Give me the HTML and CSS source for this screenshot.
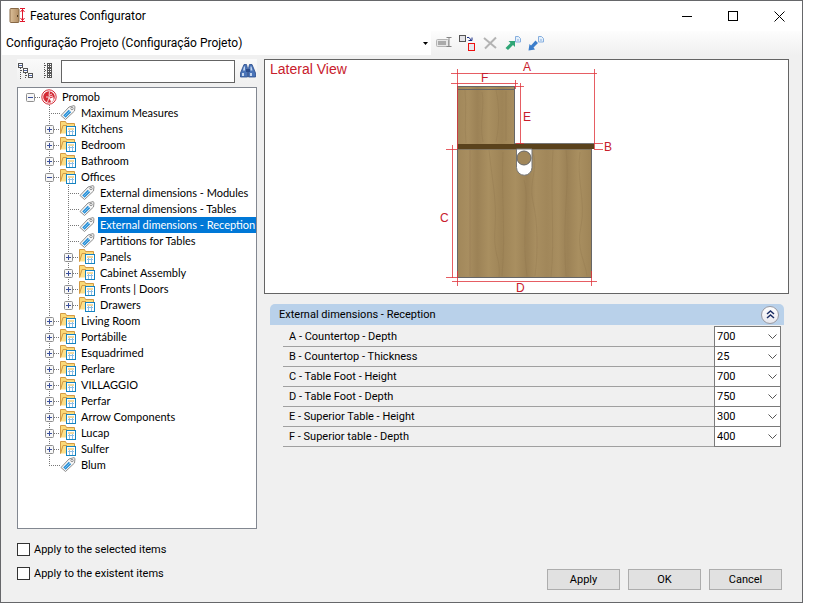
FILE: index.html
```html
<!DOCTYPE html>
<html lang="en">
  <head>
    <meta charset="UTF-8" />
    <meta name="viewport" content="width=device-width, initial-scale=1.0" />
    <title>Features Configurator</title>
    <link rel="stylesheet" href="styles.css">
  </head>
  <body>
    <!-- shared icons -->
    <svg class="sprite" aria-hidden="true">
      <symbol id="folder" viewBox="0 0 16 16">
        <path d="M.5 12.500V.5h5l1 2h8v3" fill="#fbd977" stroke="#d29a45" />
        <path d="M1 12.500l2-8h11v8z" fill="#fde08a" />
        <path d="M.5 12.500l2.500-8h4" fill="none" stroke="#d29a45" />
        <rect x="6.500" y="5.500" width="9" height="9" fill="#fff" stroke="#1583c0" />
        <path d="M8 8h6" stroke="#e9b53c" />
        <path d="M8 10.500h6M9.500 9v5M12.500 9v5" stroke="#8dbfe6" />
      </symbol>
      <symbol id="tag" viewBox="0 0 16 16">
        <path d="M1 10.500L9 2 14 .6 15 1.500 14.500 6 5.500 14.500z" fill="#f6f6f6" stroke="#8e8e8e" stroke-linejoin="round" />
        <circle cx="12" cy="3.500" r="1.200" fill="#fff" stroke="#8e8e8e" />
        <path d="M3.200 10.500L8.800 4.800l2.400 2.400-5.600 5.600z" fill="#2b8fd6" />
        <path d="M4.500 11.500l5.500-5.500" stroke="#8fd0f5" stroke-width=".8" />
      </symbol>
      <symbol id="plus" viewBox="0 0 9 9">
        <rect x=".5" y=".5" width="8" height="8" rx="1" fill="#f7f7f7" stroke="#8f8f8f" />
        <path d="M2 4.500h5M4.500 2v5" stroke="#3a4f9c" />
      </symbol>
      <symbol id="minus" viewBox="0 0 9 9">
        <rect x=".5" y=".5" width="8" height="8" rx="1" fill="#f7f7f7" stroke="#8f8f8f" />
        <path d="M2 4.500h5" stroke="#3a4f9c" />
      </symbol>
      <symbol id="chevron" viewBox="0 0 9 6">
        <path d="M.5.5l4 4 4-4" fill="none" stroke="#555" />
      </symbol>
    </svg>

    <div class="window">
      <header class="titlebar">
        <svg class="app-icon" width="17" height="16" viewBox="0 0 17 16">
          <defs>
            <linearGradient id="door"><stop offset="0" stop-color="#dcc09a" /><stop offset="1" stop-color="#b08c62" /></linearGradient>
          </defs>
          <rect x="1" y=".5" width="9" height="14" rx="1" fill="url(#door)" stroke="#876845" />
          <path d="M8.500 7v2" stroke="#4f3c24" />
          <path d="M11 .5h5M11 13.500h5M13.500 1v12M11.500 4l2-2.500 2 2.500M11.500 10l2 2.500 2-2.500" fill="none" stroke="#e0162b" />
        </svg>
        <h1 class="title">Features Configurator</h1>
        <button class="caption-btn" type="button" aria-label="Minimize">
          <svg width="11" height="11" viewBox="0 0 11 11"><path d="M0 5.500h10" stroke="#000" /></svg>
        </button>
        <button class="caption-btn" type="button" aria-label="Maximize">
          <svg width="11" height="11" viewBox="0 0 11 11"><rect x=".5" y=".5" width="9" height="9" fill="none" stroke="#000" /></svg>
        </button>
        <button class="caption-btn" type="button" aria-label="Close">
          <svg width="11" height="11" viewBox="0 0 11 11"><path d="M.5.5l10 10M10.500.5l-10 10" stroke="#000" /></svg>
        </button>
      </header>

      <div class="toolbar">
        <div class="project">
          <select class="project-select" aria-label="Project">
            <option>Configuração Projeto (Configuração Projeto)</option>
          </select>
          <svg class="project-arrow" width="5" height="3" viewBox="0 0 5 3"><path d="M0 0h5L2.500 3z" /></svg>
        </div>
        <button class="tool" type="button" aria-label="Rename">
          <svg width="16" height="16" viewBox="0 0 16 16">
            <rect x=".5" y="4.500" width="12" height="7" rx="1" fill="#e6e6e6" stroke="#b4b4b4" />
            <rect x="2" y="6" width="8" height="4" fill="#aaa" />
            <path d="M10.500 2.500h5M10.500 11.500h5M13 3v8" stroke="#858585" />
          </svg>
        </button>
        <button class="tool" type="button" aria-label="Replace">
          <svg width="16" height="16" viewBox="0 0 16 16">
            <rect x=".5" y=".5" width="6" height="6" fill="#e4e4e8" stroke="#555" />
            <path d="M8 2.500h2l2.500 3M9.500 5.500h3.500V2.500" fill="none" stroke="#1a2e86" />
            <rect x="9.500" y="8.500" width="6" height="7" fill="#e8e8ee" stroke="#ee1010" />
          </svg>
        </button>
        <button class="tool" type="button" aria-label="Delete">
          <svg width="16" height="16" viewBox="0 0 16 16"><path d="M2 3l12 10M14 2.500L3 13.500" stroke="#b3b3b3" stroke-width="2" /></svg>
        </button>
        <button class="tool" type="button" aria-label="Export">
          <svg width="16" height="16" viewBox="0 0 16 16">
            <path d="M10.500 1.500h3l2 2v3.500h-5z" fill="#e4f0fb" stroke="#86aede" />
            <path d="M12 5h2" stroke="#86aede" />
            <path d="M3.500 6h6.500v6l-2-2-5 5L.5 13l5-5z" fill="#2fa676" />
          </svg>
        </button>
        <button class="tool" type="button" aria-label="Import">
          <svg width="16" height="16" viewBox="0 0 16 16">
            <path d="M10.500 1.500h3l2 2v3.500h-5z" fill="#e4f0fb" stroke="#86aede" />
            <path d="M12 5h2" stroke="#86aede" />
            <path d="M7.500 5.500L10 8l-4.500 4.500L7 14.500.5 15.500l1-6.500 1.500 1.500z" fill="#3c7ecb" />
          </svg>
        </button>
      </div>

      <div class="content">
        <aside class="side">
          <div class="search">
            <button class="search-btn" type="button" aria-label="Expand all">
              <svg width="16" height="16" viewBox="0 0 16 16" fill="none" stroke="#555">
                <rect x=".5" y=".5" width="4" height="4" fill="#fff" /><rect x="5.500" y="5.500" width="4" height="4" fill="#fff" /><rect x="10.500" y="10.500" width="4" height="4" fill="#fff" />
                <path d="M1 2.500h3M6 7.500h3M11 12.500h3" stroke="#5068a8" />
                <path d="M2.500 5v11M7.500 10v6M3 7.500h2M8 12.500h2" stroke-dasharray="1 1" />
              </svg>
            </button>
            <button class="search-btn" type="button" aria-label="Collapse all">
              <svg width="16" height="16" viewBox="0 0 16 16" fill="none" stroke="#555">
                <path d="M4.500 0v16M5 2.500h2M5 7.500h2M5 12.500h2" stroke-dasharray="1 1" />
                <rect x="7.500" y=".5" width="4" height="4" fill="#fff" /><rect x="7.500" y="5.500" width="4" height="4" fill="#fff" /><rect x="7.500" y="10.500" width="4" height="4" fill="#fff" />
                <path d="M8 2.500h3M8 7.500h3M8 12.500h3M9.500 1v3M9.500 6v3M9.500 11v3" />
              </svg>
            </button>
            <input class="search-input" type="text" aria-label="Search" />
            <button class="search-btn" type="button" aria-label="Find">
              <svg width="16" height="14" viewBox="0 0 16 14">
                <path d="M4 .5h2.500l1 4V13h-7V9zM12 .5H9.500l-1 4V13h7V9z" fill="#4a74b8" stroke="#294b8c" stroke-width=".8" />
                <path d="M6 5h4v3H6z" fill="#294b8c" />
                <path d="M2 9h2v3H2zM10 9h2v3h-2zM4 2.500h1v4H3zM10.500 2.500h1l1 4h-2z" fill="#c5d7f0" />
              </svg>
            </button>
          </div>

          <div class="tree">
            <ul class="root">
              <li>
                <div class="node">
                  <button class="toggle" type="button" aria-label="Collapse"><svg><use href="#minus" /></svg></button><i class="stub"></i>
                  <svg class="icon" viewBox="0 0 16 16">
                    <circle cx="8" cy="8" r="7.200" fill="#fff" stroke="#d42a35" />
                    <circle cx="8" cy="8" r="5.800" fill="#d42a35" />
                    <path d="M8.500 2.500L8 6.500l3-1.500M5 8h3l4-1M8 8l1 2.500 3 .5M8 8.500L6.500 13" fill="none" stroke="#fff" stroke-width=".8" />
                    <path d="M9 9.500l3.500-1.500v3L10 13.500z" fill="#fff" />
                  </svg>
                  <span class="name">Promob</span>
                </div>
                <ul>
                  <li><div class="node"><i class="stub leaf"></i><svg class="icon"><use href="#tag" /></svg><span class="name">Maximum Measures</span></div></li>
                  <li><div class="node"><button class="toggle" type="button" aria-label="Expand"><svg><use href="#plus" /></svg></button><i class="stub"></i><svg class="icon"><use href="#folder" /></svg><span class="name">Kitchens</span></div></li>
                  <li><div class="node"><button class="toggle" type="button" aria-label="Expand"><svg><use href="#plus" /></svg></button><i class="stub"></i><svg class="icon"><use href="#folder" /></svg><span class="name">Bedroom</span></div></li>
                  <li><div class="node"><button class="toggle" type="button" aria-label="Expand"><svg><use href="#plus" /></svg></button><i class="stub"></i><svg class="icon"><use href="#folder" /></svg><span class="name">Bathroom</span></div></li>
                  <li>
                    <div class="node"><button class="toggle" type="button" aria-label="Collapse"><svg><use href="#minus" /></svg></button><i class="stub"></i><svg class="icon"><use href="#folder" /></svg><span class="name">Offices</span></div>
                    <ul>
                      <li><div class="node"><i class="stub leaf"></i><svg class="icon"><use href="#tag" /></svg><span class="name">External dimensions - Modules</span></div></li>
                      <li><div class="node"><i class="stub leaf"></i><svg class="icon"><use href="#tag" /></svg><span class="name">External dimensions - Tables</span></div></li>
                      <li><div class="node"><i class="stub leaf"></i><svg class="icon"><use href="#tag" /></svg><span class="name selected">External dimensions - Reception</span></div></li>
                      <li><div class="node"><i class="stub leaf"></i><svg class="icon"><use href="#tag" /></svg><span class="name">Partitions for Tables</span></div></li>
                      <li><div class="node"><button class="toggle" type="button" aria-label="Expand"><svg><use href="#plus" /></svg></button><i class="stub"></i><svg class="icon"><use href="#folder" /></svg><span class="name">Panels</span></div></li>
                      <li><div class="node"><button class="toggle" type="button" aria-label="Expand"><svg><use href="#plus" /></svg></button><i class="stub"></i><svg class="icon"><use href="#folder" /></svg><span class="name">Cabinet Assembly</span></div></li>
                      <li><div class="node"><button class="toggle" type="button" aria-label="Expand"><svg><use href="#plus" /></svg></button><i class="stub"></i><svg class="icon"><use href="#folder" /></svg><span class="name">Fronts | Doors</span></div></li>
                      <li><div class="node"><button class="toggle" type="button" aria-label="Expand"><svg><use href="#plus" /></svg></button><i class="stub"></i><svg class="icon"><use href="#folder" /></svg><span class="name">Drawers</span></div></li>
                    </ul>
                  </li>
                  <li><div class="node"><button class="toggle" type="button" aria-label="Expand"><svg><use href="#plus" /></svg></button><i class="stub"></i><svg class="icon"><use href="#folder" /></svg><span class="name">Living Room</span></div></li>
                  <li><div class="node"><button class="toggle" type="button" aria-label="Expand"><svg><use href="#plus" /></svg></button><i class="stub"></i><svg class="icon"><use href="#folder" /></svg><span class="name">Portábille</span></div></li>
                  <li><div class="node"><button class="toggle" type="button" aria-label="Expand"><svg><use href="#plus" /></svg></button><i class="stub"></i><svg class="icon"><use href="#folder" /></svg><span class="name">Esquadrimed</span></div></li>
                  <li><div class="node"><button class="toggle" type="button" aria-label="Expand"><svg><use href="#plus" /></svg></button><i class="stub"></i><svg class="icon"><use href="#folder" /></svg><span class="name">Perlare</span></div></li>
                  <li><div class="node"><button class="toggle" type="button" aria-label="Expand"><svg><use href="#plus" /></svg></button><i class="stub"></i><svg class="icon"><use href="#folder" /></svg><span class="name">VILLAGGIO</span></div></li>
                  <li><div class="node"><button class="toggle" type="button" aria-label="Expand"><svg><use href="#plus" /></svg></button><i class="stub"></i><svg class="icon"><use href="#folder" /></svg><span class="name">Perfar</span></div></li>
                  <li><div class="node"><button class="toggle" type="button" aria-label="Expand"><svg><use href="#plus" /></svg></button><i class="stub"></i><svg class="icon"><use href="#folder" /></svg><span class="name">Arrow Components</span></div></li>
                  <li><div class="node"><button class="toggle" type="button" aria-label="Expand"><svg><use href="#plus" /></svg></button><i class="stub"></i><svg class="icon"><use href="#folder" /></svg><span class="name">Lucap</span></div></li>
                  <li><div class="node"><button class="toggle" type="button" aria-label="Expand"><svg><use href="#plus" /></svg></button><i class="stub"></i><svg class="icon"><use href="#folder" /></svg><span class="name">Sulfer</span></div></li>
                  <li><div class="node"><i class="stub leaf"></i><svg class="icon"><use href="#tag" /></svg><span class="name">Blum</span></div></li>
                </ul>
              </li>
            </ul>
          </div>

          <div class="checks">
            <label class="check"><input type="checkbox" />Apply to the selected items</label>
            <label class="check"><input type="checkbox" />Apply to the existent items</label>
          </div>
        </aside>

        <main class="main">
          <div class="preview">
            <svg class="drawing" viewBox="265 60 523 233">
              <defs>
                <linearGradient id="wood" gradientUnits="userSpaceOnUse" x1="457" x2="502" y1="0" y2="0" spreadMethod="reflect">
                  <stop offset="0" stop-color="#a1875a" />
                  <stop offset=".25" stop-color="#a88e60" />
                  <stop offset=".45" stop-color="#9c8256" />
                  <stop offset=".7" stop-color="#a98f60" />
                  <stop offset="1" stop-color="#9e8457" />
                </linearGradient>
              </defs>
              <text class="view-name" x="270" y="74">Lateral View</text>

              <rect x="457.500" y="86.500" width="57" height="58" fill="url(#wood)" stroke="#666" />
              <path d="M458 89.500h57" stroke="#666" />
              <rect x="457.500" y="149" width="134" height="128.500" fill="url(#wood)" stroke="#666" />
              <!-- grain -->
              <g fill="none" stroke="#8b7148" stroke-opacity=".35" stroke-width=".8">
                <path d="M465 90c2 16-1 36 1 53M482 92c3 14-3 30 1 50M496 90c4 18 3 38 0 52M506 91v50" />
                <path d="M470 150v126M489 150c3 30 8 50 6 78s6 30 4 49M503 152c-2 40 3 80-1 124M532 152c8 12-4 30 1 50s5 50 2 74M524 180c6 20-3 50 3 96M553 150c-3 40 2 90-2 127M566 150c4 40-4 60 0 126M580 152c-4 26 6 50 1 74s4 34 6 50" />
              </g>
              <rect x="457" y="144" width="137" height="5" fill="#5a421c" />
              <path d="M515 143.500h79" stroke="#777" />
              <path d="M516.500 149v18.500a7.750 7.750 0 0 0 15.500 0V149z" fill="#fff" stroke="#777" />
              <circle cx="524" cy="158" r="7" fill="#a1875a" stroke="#666" />

              <!-- dimension lines -->
              <g class="dims">
                <path d="M451 73.500h146M457.500 69v80M594.500 69v80" />
                <path d="M451 83.500h67M515.500 80v9" />
                <path d="M520.500 83v61M514 86.500h10M516 143.500h8" />
                <path d="M594 143.500h9M594 149.500h9" />
                <path d="M452.500 145v133M446 149.500h11M446 277.500h11" />
                <path d="M452 281.500h145M457.500 271v15M591.500 271v15" />
              </g>
              <g class="dim-names">
                <text x="523" y="71">A</text>
                <text x="481" y="82">F</text>
                <text x="523" y="121">E</text>
                <text x="604" y="151">B</text>
                <text x="440" y="222">C</text>
                <text x="516" y="292">D</text>
              </g>
            </svg>
          </div>

          <section class="panel">
            <div class="panel-head">
              <h2 class="panel-title">External dimensions - Reception</h2>
              <button class="collapse" type="button" aria-label="Collapse panel">
                <svg width="9" height="9" viewBox="0 0 9 9"><path d="M1 4l3.500-3L8 4M1 8l3.500-3L8 8" fill="none" stroke="#1c2f66" stroke-width="1.500" /></svg>
              </button>
            </div>
            <div class="fields">
              <div class="field">
                <label for="dim-a">A - Countertop - Depth</label>
                <div class="combo"><select id="dim-a"><option>700</option></select><svg><use href="#chevron" /></svg></div>
              </div>
              <div class="field">
                <label for="dim-b">B - Countertop - Thickness</label>
                <div class="combo"><select id="dim-b"><option>25</option></select><svg><use href="#chevron" /></svg></div>
              </div>
              <div class="field">
                <label for="dim-c">C - Table Foot - Height</label>
                <div class="combo"><select id="dim-c"><option>700</option></select><svg><use href="#chevron" /></svg></div>
              </div>
              <div class="field">
                <label for="dim-d">D - Table Foot - Depth</label>
                <div class="combo"><select id="dim-d"><option>750</option></select><svg><use href="#chevron" /></svg></div>
              </div>
              <div class="field">
                <label for="dim-e">E - Superior Table - Height</label>
                <div class="combo"><select id="dim-e"><option>300</option></select><svg><use href="#chevron" /></svg></div>
              </div>
              <div class="field">
                <label for="dim-f">F - Superior table - Depth</label>
                <div class="combo"><select id="dim-f"><option>400</option></select><svg><use href="#chevron" /></svg></div>
              </div>
            </div>
          </section>

          <footer class="actions">
            <button class="btn" type="button">Apply</button>
            <button class="btn" type="button">OK</button>
            <button class="btn" type="button">Cancel</button>
          </footer>
        </main>
      </div>
    </div>
  </body>
</html>
```

FILE: styles.css
```css
* {
  box-sizing: border-box;
}

body {
  height: 100vh;
  margin: 0;
  padding: 0 15px 10px 0;
  background-color: #fff;
  font-family: Roboto, "Liberation Sans", sans-serif;
  font-size: 11px;
  color: #000;
}

button,
input,
select {
  margin: 0;
  padding: 0;
  font: inherit;
  color: inherit;
}

svg {
  display: block;
}

.sprite {
  position: absolute;
  width: 0;
  height: 0;
}

.window {
  display: flex;
  flex-direction: column;
  height: 100%;
  border: 1px solid #66676a;
  background-color: #f0f0f0;
}

/* title bar */
.titlebar {
  display: flex;
  align-items: center;
  height: 30px;
  padding-left: 8px;
  background-color: #fff;
}

.title {
  flex: 1;
  margin: 0 0 0 4px;
  font-size: 12px;
  font-weight: 400;
}

.caption-btn {
  display: grid;
  place-items: center;
  width: 46px;
  height: 30px;
  border: 0;
  background: none;
}

/* toolbar */
.toolbar {
  display: flex;
  align-items: center;
  gap: 7px;
  height: 24px;
  padding-left: 1px;
  background: linear-gradient(#fdfdfd, #f0f0f0);
}

.project {
  display: grid;
  align-items: center;
  width: 429px;
  margin-right: -2px;
}

.project-select {
  grid-area: 1 / 1;
  height: 24px;
  padding-left: 4px;
  border: 0;
  appearance: none;
  background-color: #fff;
  font-size: 12px;
}

.project-arrow {
  grid-area: 1 / 1;
  justify-self: end;
  margin-right: 3px;
  pointer-events: none;
}

.tool {
  width: 16px;
  height: 16px;
  border: 0;
  background: none;
}

.content {
  display: flex;
  flex: 1;
  gap: 7px;
  min-height: 0;
  padding: 4px 13px 12px 16px;
}

/* left column */
.side {
  display: flex;
  flex-direction: column;
  width: 240px;
}

.search {
  display: flex;
  align-items: center;
  gap: 4px;
  height: 24px;
  background: linear-gradient(#fafafa, #f0f0f0);
}

.search-btn {
  display: grid;
  place-items: center;
  width: 18px;
  height: 22px;
  border: 0;
  background: none;
}

.search-input {
  flex: 1;
  min-width: 0;
  height: 23px;
  border: 1px solid #646464;
  background-color: #fff;
}

.tree {
  flex: 1;
  min-height: 0;
  margin-top: 4px;
  padding: 1px 0 0 8px;
  border: 1px solid #828790;
  background-color: #fff;
  font-family: Lato, "Liberation Sans", sans-serif;
  overflow: hidden;
}

.tree ul {
  margin: 0;
  padding: 0 0 0 19px;
  list-style: none;
}

.tree .root {
  padding: 0;
}

/* dotted line down the siblings, it stops halfway the last one */
.tree li li {
  background: repeating-linear-gradient(#777 0 1px, transparent 1px 2px) 4px 0 / 1px 100% no-repeat;
}

.tree li li:last-child {
  background-size: 1px 8px;
}

.node {
  display: flex;
  align-items: center;
  height: 16px;
  white-space: nowrap;
}

.toggle {
  flex: none;
  width: 9px;
  height: 9px;
  border: 0;
  background-color: #fff;
}

.toggle svg {
  width: 9px;
  height: 9px;
}

.stub {
  flex: none;
  width: 6px;
  height: 1px;
  background: repeating-linear-gradient(to right, #777 0 1px, transparent 1px 2px);
}

.leaf {
  width: 11px;
  margin-left: 4px;
}

.icon {
  flex: none;
  width: 16px;
  height: 16px;
  margin-right: 3px;
}

.name {
  padding: 0 2px;
  line-height: 16px;
}

.selected {
  background-color: #0078d7;
  color: #fff;
}

.checks {
  display: flex;
  flex-direction: column;
  gap: 8px;
  padding: 12px 0 9px;
}

.check {
  display: flex;
  align-items: center;
  gap: 4px;
  height: 16px;
}

.check input {
  width: 13px;
  height: 13px;
  border: 1px solid #333;
  appearance: none;
  background-color: #fff;
}

/* right column */
.main {
  display: flex;
  flex: 1;
  flex-direction: column;
  min-width: 0;
}

.preview {
  border: 1px solid #646464;
  background-color: #fff;
}

.drawing {
  width: 100%;
  overflow: visible;
}

.drawing text {
  font-family: "Liberation Sans", Arial, sans-serif;
  fill: #c8202c;
}

.view-name {
  font-size: 14px;
}

.dim-names {
  font-size: 12px;
}

.dims {
  fill: none;
  stroke: #e0343c;
  stroke-opacity: 0.8;
}

.panel {
  margin: 10px 5px 0 6px;
}

.panel-head {
  display: flex;
  align-items: center;
  justify-content: space-between;
  height: 21px;
  padding: 0 5px 0 9px;
  border-radius: 5px 5px 0 0;
  background-color: #b9d1ea;
}

.panel-title {
  margin: 0;
  font-size: 11px;
  font-weight: 400;
}

.collapse {
  display: grid;
  place-items: center;
  width: 18px;
  height: 18px;
  border: 1px solid #9a9aa2;
  border-radius: 50%;
  background: linear-gradient(#fff, #e8e8ee);
}

.fields {
  padding: 2px 3px 0 13px;
}

.field {
  display: flex;
  height: 21px;
  margin-top: -1px;
}

.field label {
  flex: 1;
  padding-left: 6px;
  border-bottom: 1px solid #a0a0a0;
  line-height: 22px;
}

.combo {
  display: grid;
  align-items: center;
  width: 67px;
}

.combo select {
  grid-area: 1 / 1;
  height: 21px;
  padding: 0 0 1px 2px;
  border: 1px solid #7a7a7a;
  border-radius: 0;
  appearance: none;
  background-color: #fff;
  font-size: 11px;
}

.combo svg {
  grid-area: 1 / 1;
  justify-self: end;
  width: 9px;
  height: 6px;
  margin-right: 4px;
  pointer-events: none;
}

.actions {
  display: flex;
  justify-content: flex-end;
  gap: 8px;
  margin-top: auto;
  padding-right: 7px;
}

.btn {
  width: 73px;
  height: 21px;
  border: 1px solid #adadad;
  background-color: #e1e1e1;
}
```
